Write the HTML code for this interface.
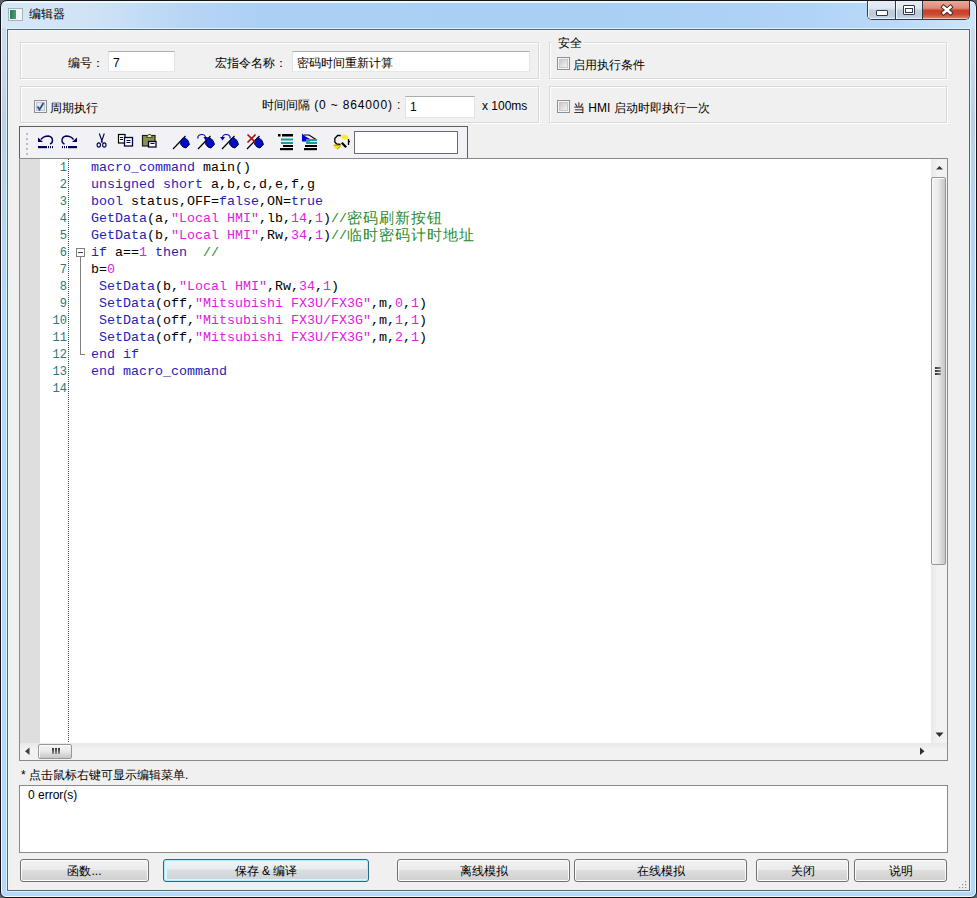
<!DOCTYPE html>
<html><head><meta charset="utf-8">
<style>
*{margin:0;padding:0;box-sizing:border-box}
html,body{width:977px;height:898px;overflow:hidden;background:#5a6068;font-family:"Liberation Sans",sans-serif;font-size:12px;color:#000}
.a{position:absolute}
#win{left:0;top:0;width:977px;height:898px;border:1px solid #16141a;border-radius:7px 7px 6px 6px;
 background:#b4d8fa;box-shadow:inset 0 0 0 1px #eef8ff;overflow:hidden}
#title{left:1px;top:1px;width:973px;height:27px;border-top:1px solid #e8faff;background:linear-gradient(90deg,#d6e7f7 0,#d0e3f6 90px,#b8d6f4 180px,#acd0f5 260px,#a9cff5 600px,#b0d3f6 800px,#bcdaf8 900px,#cfe6fa 973px)}
#client{left:7px;top:29px;width:963px;height:862px;border:1px solid #5a6570;background:#f0f0f0;box-shadow:0 0 0 1px #d8f4ff, inset 1px 1px 0 #f8f6f4}
.t{position:absolute;white-space:nowrap;line-height:14px}
.zh{display:inline-block;width:12px;text-align:center;overflow:visible}
.grp{position:absolute;border:1px solid #d8d8d8;box-shadow:1px 1px 0 #fff, inset 1px 1px 0 #fff}
.inp{position:absolute;background:#fff;border:1px solid #e2e3ea;border-top-color:#abadb3;border-bottom-color:#e3e9ef}
.chk{position:absolute;width:13px;height:13px;border:1px solid #8e8f8f;background:#f4f4f4;box-shadow:inset 0 0 0 1px #f4f4f4, inset 0 0 0 2px #c8c8c8;}
.chk i{position:absolute;left:2px;top:2px;width:7px;height:7px;background:linear-gradient(135deg,#c8c8c8,#f4f4f4)}
.btn{position:absolute;height:23px;border:1px solid #707070;border-radius:3px;background:linear-gradient(#f2f2f2 0,#ebebeb 45%,#dddddd 50%,#cfcfcf 100%);box-shadow:inset 0 0 0 1px #fcfcfc;text-align:center;line-height:23px}
.code{position:absolute;left:91px;font-family:"Liberation Mono",monospace;font-size:13.33px;line-height:17px;white-space:pre;color:#000}
.ln{position:absolute;width:30px;left:37px;text-align:right;font-family:"Liberation Mono",monospace;font-size:12px;color:#2a7878;line-height:17px}
.cj{display:inline-block;width:16px;text-align:center;font-family:"Liberation Sans",sans-serif;font-size:15px;line-height:15px;vertical-align:-1px}
.k{color:#2424b4}.s{color:#e020e0}.n{color:#e020e0}.c{color:#2a8a2a}
</style></head><body>
<div id="win" class="a">
 <div id="title" class="a"></div>
</div>
<div class="a" style="left:2px;top:28px;width:4px;height:300px;background:linear-gradient(#d0dcea 0,#c0d0e4 30%,#b8d4f2 70%,#b4d8fa 100%)"></div>
<div class="a" style="left:971px;top:28px;width:4px;height:300px;background:linear-gradient(#d0dcea 0,#c0d0e4 30%,#b8d4f2 70%,#b4d8fa 100%)"></div>
<div id="client" class="a"></div>

<!-- title icon & text -->
<div class="a" style="left:8px;top:8px;width:15px;height:13px;border:1px solid #a4b2bc;background:#f2f6f6"></div>
<div class="a" style="left:10px;top:10px;width:6px;height:9px;background:linear-gradient(90deg,#2f7a5a,#4aa07a)"></div>
<div class="t" style="left:29px;top:7px;font-size:12px"><span class="zh">编</span><span class="zh">辑</span><span class="zh">器</span></div>

<!-- title buttons -->
<div class="a" style="left:867px;top:0;width:103px;height:20px;border:1px solid #303c4c;border-top-color:#16141a;border-radius:0 0 5px 5px;overflow:hidden;background:#fff">
  <div class="a" style="left:0;top:0;width:27px;height:18px;box-shadow:inset 1px 0 0 #f4f8fc, inset 0 -1px 0 #e8f0f8;background:linear-gradient(#e8eef6 0,#dfe6ef 40%,#c3cfdc 52%,#bccadb 75%,#c8d8ea 100%)"></div>
  <div class="a" style="left:27px;top:0;width:1px;height:19px;background:#303c4c"></div>
  <div class="a" style="left:28px;top:0;width:26px;height:18px;box-shadow:inset 1px 0 0 #f4f8fc, inset 0 -1px 0 #e8f0f8;background:linear-gradient(#e8eef6 0,#dfe6ef 40%,#c3cfdc 52%,#bccadb 75%,#c8d8ea 100%)"></div>
  <div class="a" style="left:54px;top:0;width:1px;height:19px;background:#303c4c"></div>
  <div class="a" style="left:55px;top:0;width:46px;height:18px;box-shadow:inset 0 -1px 0 #f0c0b0;background:linear-gradient(#e8aa98 0,#dc8a76 40%,#c8402a 52%,#cc4a30 75%,#e08a6a 100%)"></div>
</div>
<div class="a" style="left:876px;top:10px;width:12px;height:6px;border:1px solid #2c3a4a;border-radius:1px;background:#fff"></div>
<div class="a" style="left:903px;top:5px;width:12px;height:10px;border:1px solid #2c3a4a;border-radius:1px;background:#fff"></div>
<div class="a" style="left:905px;top:8px;width:8px;height:5px;border:1px solid #2c3a4a"></div>
<svg class="a" style="left:937px;top:2px" width="20" height="16" viewBox="0 0 20 16">
 <path d="M6.5 5 L13.5 11 M13.5 5 L6.5 11" stroke="#4a2a2a" stroke-width="4.4" stroke-linecap="square"/>
 <path d="M6.5 5 L13.5 11 M13.5 5 L6.5 11" stroke="#fff" stroke-width="2.4" stroke-linecap="square"/>
</svg>

<!-- group boxes -->
<div class="grp" style="left:20px;top:42px;width:519px;height:37px"></div>
<div class="grp" style="left:20px;top:86px;width:519px;height:37px"></div>
<div class="grp" style="left:549px;top:42px;width:398px;height:37px"></div>
<div class="grp" style="left:549px;top:86px;width:398px;height:37px"></div>

<div class="t" style="left:551px;top:36px;background:#f0f0f0;padding:0 2px 0 7px"><span class="zh">安</span><span class="zh">全</span></div>
<div class="t" style="left:68px;top:56px"><span class="zh">编</span><span class="zh">号</span><span class="zh">：</span></div>
<div class="inp" style="left:108px;top:51px;width:67px;height:21px"></div>
<div class="t" style="left:113px;top:56px">7</div>
<div class="t" style="left:215px;top:56px"><span class="zh">宏</span><span class="zh">指</span><span class="zh">令</span><span class="zh">名</span><span class="zh">称</span><span class="zh">：</span></div>
<div class="inp" style="left:292px;top:51px;width:238px;height:21px"></div>
<div class="t" style="left:297px;top:56px"><span class="zh">密</span><span class="zh">码</span><span class="zh">时</span><span class="zh">间</span><span class="zh">重</span><span class="zh">新</span><span class="zh">计</span><span class="zh">算</span></div>
<div class="chk" style="left:557px;top:57px"><i></i></div>
<div class="t" style="left:573px;top:58px"><span class="zh">启</span><span class="zh">用</span><span class="zh">执</span><span class="zh">行</span><span class="zh">条</span><span class="zh">件</span></div>

<div class="chk" style="left:34px;top:100px;background:#dfe8f4;box-shadow:inset 0 0 0 1px #f4f4f4, inset 0 0 0 2px #b8c4d4"></div>
<svg class="a" style="left:34px;top:100px" width="13" height="13" viewBox="0 0 13 13"><path d="M3.5 6.5 L5.5 9.5 L9.5 3" fill="none" stroke="#3e4e7a" stroke-width="1.8"/></svg>
<div class="t" style="left:50px;top:101px"><span class="zh">周</span><span class="zh">期</span><span class="zh">执</span><span class="zh">行</span></div>
<div class="t" style="left:262px;top:98px"><span class="zh">时</span><span class="zh">间</span><span class="zh">间</span><span class="zh">隔</span><span style="letter-spacing:0.85px"> (0 ~ 864000) :</span></div>
<div class="inp" style="left:405px;top:96px;width:70px;height:22px"></div>
<div class="t" style="left:410px;top:100px">1</div>
<div class="t" style="left:482px;top:99px">x 100ms</div>
<div class="chk" style="left:557px;top:100px"><i></i></div>
<div class="t" style="left:573px;top:101px"><span class="zh">当</span> HMI <span class="zh">启</span><span class="zh">动</span><span class="zh">时</span><span class="zh">即</span><span class="zh">执</span><span class="zh">行</span><span class="zh">一</span><span class="zh">次</span></div>

<!-- toolbar -->
<div class="a" style="left:19px;top:126px;width:449px;height:33px;border:1px solid #5e5e5e;border-bottom:none;background:#f2f2f6"></div>
<div class="inp" style="left:354px;top:131px;width:104px;height:23px;border:1px solid #6a6a6a"></div>

<svg class="a" style="left:0;top:0" width="977" height="170" viewBox="0 0 977 170">
 <g fill="#bcbcbc"><rect x="26" y="133" width="2" height="2"/><rect x="26" y="138" width="2" height="2"/><rect x="26" y="143" width="2" height="2"/><rect x="26" y="148" width="2" height="2"/><rect x="26" y="153" width="2" height="2"/></g>
 <g fill="none" stroke="#00005a" stroke-width="1.4">
  <path d="M41 139.5 C43 136.5 46 136 48.5 136 C51 136.5 52.5 138.5 52.5 140.5 C52.5 142.5 51.5 143.5 50 144"/>
  <path d="M73.5 139.5 C71.5 136.5 68.5 136 66 136 C63.5 136.5 62 138.5 62 140.5 C62 142.5 63 143.5 64.5 144"/>
 </g>
 <g fill="#00005a">
  <path d="M38 137.5 L38 142 L43 142 Z"/><rect x="38" y="146" width="9" height="2.2"/><rect x="48" y="146" width="1" height="2.2"/><rect x="50" y="146" width="1" height="2.2"/><rect x="52" y="146" width="1" height="2.2"/>
  <path d="M77 137.5 L77 142 L72 142 Z"/><rect x="68" y="146" width="9" height="2.2"/><rect x="66" y="146" width="1" height="2.2"/><rect x="64" y="146" width="1" height="2.2"/><rect x="62" y="146" width="1" height="2.2"/>
 </g>
 <!-- cut -->
 <g fill="none" stroke="#000050" stroke-width="1.1">
  <path d="M99.3 133.5 L102.5 142.5 M104.3 133.5 L101.2 142.5"/>
  <ellipse cx="98.8" cy="145" rx="1.7" ry="2.1"/><ellipse cx="104.3" cy="145" rx="1.7" ry="2.1"/>
 </g>
 <!-- copy -->
 <rect x="118.5" y="134.5" width="6.5" height="8.5" fill="#fff" stroke="#000" stroke-width="1.2"/>
 <path d="M120 137.5h3M120 139.5h3" stroke="#000" stroke-width="1"/>
 <rect x="124.5" y="137.5" width="8" height="8.5" fill="#fff" stroke="#000040" stroke-width="1.3"/>
 <path d="M126.5 140.5h4M126.5 142.5h4" stroke="#000040" stroke-width="1"/>
 <!-- paste -->
 <rect x="142.5" y="135.5" width="12.5" height="10.5" fill="#8c8c5c" stroke="#202010" stroke-width="1.2"/>
 <path d="M146.5 137.5 L148.5 134.5 L150.5 134.5 L152.5 137.5 Z" fill="#f0f0b0" stroke="#303020" stroke-width="0.8"/>
 <rect x="148.5" y="141.5" width="7.5" height="5.5" fill="#fff" stroke="#000040" stroke-width="1.3"/>
 <path d="M150.5 143.5h4" stroke="#000040" stroke-width="1"/>
 <!-- bookmarks -->
 <g id="bm">
  <path d="M173 149 L185.5 136" stroke="#000" stroke-width="1.2"/>
  <path d="M181.5 139.5 L184.5 137.5 L188 140.5 L189.5 144.5 L186 148 L183 147 L180.5 144 Z" fill="#0010c0" stroke="#00005a" stroke-width="1"/>
 </g>
 <use href="#bm" x="25"/><use href="#bm" x="49"/><use href="#bm" x="74"/>
 <path d="M198 138.5 C197 135.5 200 134.5 202 134.5 C204 134.5 205.5 136 205.5 137.5" fill="none" stroke="#0000a8" stroke-width="1.2"/>
 <path d="M203.5 137 L208 137 L205.5 140.5 Z" fill="#0000a8"/>
 <path d="M230 138.5 C231 135.5 228 134.5 226 134.5 C224 134.5 222.5 136 222.5 137.5" fill="none" stroke="#0000a8" stroke-width="1.2"/>
 <path d="M220 137 L225 137 L222.5 140.5 Z" fill="#0000a8"/>
 <path d="M247.5 134.5 L255.5 142.5 M255.5 134.5 L247.5 142.5" stroke="#a01010" stroke-width="1.6"/>
 <!-- indent -->
 <g fill="#000"><rect x="278" y="134" width="2.5" height="2.5"/><rect x="282" y="134" width="11" height="2.5"/><rect x="283" y="145" width="10" height="2"/><rect x="280" y="148" width="13" height="2.2"/></g>
 <g fill="#1e9c9c"><rect x="281" y="138.5" width="12" height="2"/><rect x="281" y="142" width="12" height="2"/></g>
 <!-- outdent -->
 <path d="M302 133.5 L302 141.5 L310 141.5 L310 139 L305.5 136.5 Z" fill="#0000d8"/>
 <path d="M304 135 L309 135 L316 139.5" fill="none" stroke="#000" stroke-width="1.2"/>
 <g fill="#1e9c9c"><rect x="306" y="139" width="11" height="2"/><rect x="306" y="142" width="11" height="2"/></g>
 <g fill="#000"><rect x="305" y="145" width="12" height="2"/><rect x="304" y="148" width="13" height="2.2"/></g>
 <!-- find replace -->
 <path d="M341.5 144.5 L333 144.5 L334 147.5 L337 149.5 L340.5 147 Z" fill="#f4f020"/>
 <path d="M341 135 L346.5 134.8 L349 138.5 L345.5 139.5 L342 139 Z" fill="#f4f020"/>
 <path d="M340.8 135.5 L337.5 135.5 L334.8 138.5 L334.8 142 L336.5 143.8 L340.5 144.5" fill="none" stroke="#000" stroke-width="1.3"/>
 <path d="M341.8 142.8 L346.2 147.2" stroke="#000" stroke-width="2.2"/>
 <path d="M348.5 139 L348.5 145 M348.3 141.5 L350 141.5" stroke="#000" stroke-width="1.3"/>
 <path d="M334 145.2 L339.5 145.2 M337 149.2 L340.5 146" stroke="#807010" stroke-width="0.8"/>
</svg>

<!-- editor -->
<div class="a" style="left:19px;top:158px;width:929px;height:603px;border:1px solid #8a8a8a;background:#fff"></div>
<div class="a" style="left:20px;top:159px;width:20px;height:584px;background:#dedede"></div>
<div class="a" style="left:68px;top:159px;width:1px;height:584px;background:repeating-linear-gradient(#3a4a4a 0,#3a4a4a 1px,transparent 1px,transparent 2px)"></div>
<div class="a" style="left:76px;top:248px;width:9px;height:9px;border:1px solid #808080;background:#fff"></div>
<div class="a" style="left:78px;top:252px;width:5px;height:1px;background:#404040"></div>
<div class="a" style="left:80px;top:257px;width:1px;height:98px;background:#808080"></div>
<div class="a" style="left:80px;top:354px;width:5px;height:1px;background:#808080"></div>
<!-- v scrollbar -->
<div class="a" style="left:931px;top:159px;width:16px;height:585px;background:linear-gradient(90deg,#e8e8e8,#f2f2f2 40%,#f2f2f2)"></div>
<div class="a" style="left:931px;top:177px;width:15px;height:388px;border:1px solid #979797;border-radius:2px;background:linear-gradient(90deg,#f2f2f2 0,#ebebeb 45%,#d6d6d8 75%,#c6c6ca 100%);box-shadow:inset 1px 1px 0 #fafafa"></div>
<div class="a" style="left:935px;top:367px;width:6px;height:2px;background:linear-gradient(90deg,#303030,#909090)"></div>
<div class="a" style="left:935px;top:370px;width:6px;height:2px;background:linear-gradient(90deg,#303030,#909090)"></div>
<div class="a" style="left:935px;top:373px;width:6px;height:2px;background:linear-gradient(90deg,#303030,#909090)"></div>
<!-- h scrollbar -->
<div class="a" style="left:20px;top:743px;width:927px;height:17px;background:linear-gradient(#e8e8e8,#f2f2f2 40%,#f2f2f2)"></div>
<div class="a" style="left:38px;top:744px;width:34px;height:15px;border:1px solid #979797;border-radius:2px;background:linear-gradient(#f2f2f2 0,#ebebeb 45%,#d6d6d8 75%,#c6c6ca 100%);box-shadow:inset 1px 1px 0 #fafafa"></div>
<div class="a" style="left:52px;top:748px;width:2px;height:6px;background:linear-gradient(#303030,#909090)"></div>
<div class="a" style="left:55px;top:748px;width:2px;height:6px;background:linear-gradient(#303030,#909090)"></div>
<div class="a" style="left:58px;top:748px;width:2px;height:6px;background:linear-gradient(#303030,#909090)"></div>
<svg class="a" style="left:0;top:0" width="977" height="898" viewBox="0 0 977 898">
 <path d="M936 169.5 L939.5 166 L943 169.5 Z" fill="#383838"/>
 <path d="M935.5 732.5 L943.5 732.5 L939.5 737 Z" fill="#303030"/>
 <path d="M29.5 747.5 L29.5 755 L25 751.2 Z" fill="#404040"/>
 <path d="M920 747.5 L920 755 L924.5 751.2 Z" fill="#303030"/>
</svg>

<!-- code -->
<div class="ln" style="top:160px">1<br>2<br>3<br>4<br>5<br>6<br>7<br>8<br>9<br>10<br>11<br>12<br>13<br>14</div>
<div class="code" style="top:159px"><span class="k">macro_command</span> main()
<span class="k">unsigned</span> <span class="k">short</span> a,b,c,d,e,f,g
<span class="k">bool</span> status,OFF=<span class="k">false</span>,ON=<span class="k">true</span>
<span class="k">GetData</span>(a,<span class="s">"Local HMI"</span>,lb,<span class="n">14</span>,<span class="n">1</span>)<span class="c">//<span class="cj">密</span><span class="cj">码</span><span class="cj">刷</span><span class="cj">新</span><span class="cj">按</span><span class="cj">钮</span></span>
<span class="k">GetData</span>(b,<span class="s">"Local HMI"</span>,Rw,<span class="n">34</span>,<span class="n">1</span>)<span class="c">//<span class="cj">临</span><span class="cj">时</span><span class="cj">密</span><span class="cj">码</span><span class="cj">计</span><span class="cj">时</span><span class="cj">地</span><span class="cj">址</span></span>
<span class="k">if</span> a==<span class="n">1</span> <span class="k">then</span>  <span class="c">//</span>
b=<span class="n">0</span>
 <span class="k">SetData</span>(b,<span class="s">"Local HMI"</span>,Rw,<span class="n">34</span>,<span class="n">1</span>)
 <span class="k">SetData</span>(off,<span class="s">"Mitsubishi FX3U/FX3G"</span>,m,<span class="n">0</span>,<span class="n">1</span>)
 <span class="k">SetData</span>(off,<span class="s">"Mitsubishi FX3U/FX3G"</span>,m,<span class="n">1</span>,<span class="n">1</span>)
 <span class="k">SetData</span>(off,<span class="s">"Mitsubishi FX3U/FX3G"</span>,m,<span class="n">2</span>,<span class="n">1</span>)
<span class="k">end</span> <span class="k">if</span>
<span class="k">end</span> <span class="k">macro_command</span>
</div>

<!-- bottom -->
<div class="t" style="left:21px;top:768px">* <span class="zh">点</span><span class="zh">击</span><span class="zh">鼠</span><span class="zh">标</span><span class="zh">右</span><span class="zh">键</span><span class="zh">可</span><span class="zh">显</span><span class="zh">示</span><span class="zh">编</span><span class="zh">辑</span><span class="zh">菜</span><span class="zh">单</span>.</div>
<div class="a" style="left:19px;top:785px;width:929px;height:68px;border:1px solid #8a8a8a;background:#fff"></div>
<div class="t" style="left:28px;top:788px">0 error(s)</div>

<div class="btn" style="left:20px;top:859px;width:129px"><span class="zh">函</span><span class="zh">数</span>...</div>
<div class="btn" style="left:163px;top:859px;width:206px;border-color:#2a6688;box-shadow:inset 0 0 0 1px #b4ecfa, inset 1px 0 0 2px #d8f4fc;background:linear-gradient(#f0f6f8 0,#e8eef0 40%,#d8dde0 50%,#ccd2d6 100%)"><span class="zh">保</span><span class="zh">存</span> &amp; <span class="zh">编</span><span class="zh">译</span></div>
<div class="btn" style="left:397px;top:859px;width:173px"><span class="zh">离</span><span class="zh">线</span><span class="zh">模</span><span class="zh">拟</span></div>
<div class="btn" style="left:574px;top:859px;width:173px"><span class="zh">在</span><span class="zh">线</span><span class="zh">模</span><span class="zh">拟</span></div>
<div class="btn" style="left:756px;top:859px;width:93px"><span class="zh">关</span><span class="zh">闭</span></div>
<div class="btn" style="left:854px;top:859px;width:93px"><span class="zh">说</span><span class="zh">明</span></div>
<svg class="a" style="left:955px;top:878px" width="14" height="12" viewBox="0 0 14 12"><g fill="#8a8a8a">
<rect x="10" y="3" width="1.2" height="1.2"/><rect x="7" y="6" width="1.2" height="1.2"/><rect x="10" y="6" width="1.2" height="1.2"/>
<rect x="4" y="9" width="1.2" height="1.2"/><rect x="7" y="9" width="1.2" height="1.2"/><rect x="10" y="9" width="1.2" height="1.2"/></g></svg>
</body></html>
